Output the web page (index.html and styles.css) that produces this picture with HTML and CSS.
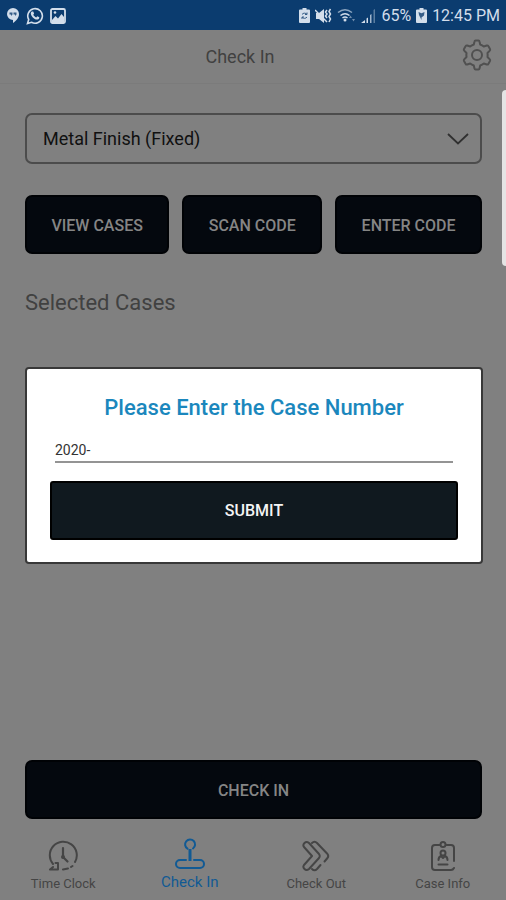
FILE: index.html
```html
<!DOCTYPE html>
<html lang="en">
<head>
<meta charset="utf-8">
<meta name="viewport" content="width=device-width, initial-scale=1">
<title>Check In</title>
<link rel="stylesheet" href="styles.css">
</head>
<body>
<div class="app">
  <div class="status">
    <div class="status-group notifications">
      <svg width="14" height="17" viewBox="0 0 14 17"><path fill="currentColor" d="M7 1a6 6 0 0 1 6 6c0 4-3 7-6 9v-3A6 6 0 1 1 7 1z"/><path class="ink" d="M3.500 5.500h3v2L5 9V7.500H3.500zM7.500 5.500h3v2L9 9V7.500H7.500z"/></svg>
      <svg width="18" height="18" viewBox="0 0 18 18"><path fill="none" stroke="currentColor" stroke-width="1.600" d="M1.500 16.500l1.200-4A7.300 7.300 0 1 1 5.500 15.300z"/><path fill="currentColor" d="M6 4.500l1.200.1.900 2-.8 1.100c.7 1.300 1.600 2.100 2.900 2.700l1.100-1.100 2 1c.1 1.500-.9 2.300-2.300 2.300C8 12.500 5 9 4.800 6.500c0-.9.500-1.700 1.200-2z"/></svg>
      <svg width="16" height="16" viewBox="0 0 16 16"><rect x="1" y="1" width="14" height="14" rx="1.500" fill="none" stroke="currentColor" stroke-width="1.800"/><path fill="currentColor" d="M2 12l3.500-4 2.500 2.500L11.500 6 14 9v5H2z"/><circle cx="5" cy="4.500" r="1.300" fill="currentColor"/></svg>
    </div>
    <div class="status-group">
      <svg width="11" height="15" viewBox="0 0 11 15"><path fill="currentColor" d="M3.500 0h4v1.500H10a1 1 0 0 1 1 1V14a1 1 0 0 1-1 1H1a1 1 0 0 1-1-1V2.500a1 1 0 0 1 1-1h2.500z"/><path class="ink-line" d="M3 6.500a3 3 0 0 1 5 0M8 9a3 3 0 0 1-5 0M8 4.500v2H6M3 11V9h2"/></svg>
      <svg width="17" height="16" viewBox="0 0 17 16"><path fill="currentColor" d="M1 5h3l5-4v14l-5-4H1z"/><path fill="none" stroke="currentColor" stroke-width="1.500" d="M0 2l12 12M12 2l-1.500 2L12 6l-1.500 2 1.500 2M15.500 1L14 3.500 15.500 6 14 8.500l1.500 2.500-1.500 3"/></svg>
      <svg width="19" height="15" viewBox="0 0 19 15"><g fill="none" stroke="currentColor" stroke-width="1.500"><path d="M1 4.500Q8 -1 15 4.500" opacity=".65"/><path d="M3.500 7.500Q8 4 12.500 7.500M5.500 10Q8 8 10.500 10"/></g><circle cx="8" cy="12" r="1.500" fill="currentColor"/><path fill="currentColor" opacity=".5" d="M12 10h3l-1.500-2.500zM15 11h3l-1.500 2.500z"/></svg>
      <svg width="15" height="14" viewBox="0 0 15 14"><path fill="currentColor" d="M0 14h4v-3zM5.500 14H7V8.500l-1.500 1z"/><path fill="currentColor" opacity=".75" d="M9 14h1.500V5L9 6z"/><path fill="currentColor" opacity=".4" d="M12.500 14H14V0l-1.500 1z"/></svg>
      <span>65%</span>
      <svg width="11" height="15" viewBox="0 0 11 15"><path fill="currentColor" d="M3.500 0h4v1.500H10a1 1 0 0 1 1 1V14a1 1 0 0 1-1 1H1a1 1 0 0 1-1-1V2.500a1 1 0 0 1 1-1h2.500z"/><path class="ink" d="M2.500 4l3 1.200L8.500 4 8 7.500 5.500 9.500V12L4 9l-1-2z"/></svg>
      <time>12:45 PM</time>
    </div>
  </div>

  <div class="screen">
    <header class="header">
      <h1>Check In</h1>
      <button class="settings" type="button" aria-label="Settings">
        <svg width="30" height="32" viewBox="0 0 30 32"><g fill="none" stroke="currentColor" stroke-width="2" stroke-linejoin="round"><path d="M13.500 1.500h3q.8 0 1 1l.7 3q2 .7 3.600 2l3-1q1-.3 1.500.6l1.700 2.900q.5.900-.2 1.600L25.500 14q.3 2 0 4l2.300 2.400q.7.700.2 1.600l-1.700 2.900q-.5.900-1.500.6l-3-1q-1.600 1.300-3.600 2l-.7 3q-.2 1-1 1h-3q-.8 0-1-1l-.7-3q-2-.7-3.600-2l-3 1q-1 .3-1.500-.6L2 22q-.5-.9.200-1.600L4.500 18q-.3-2 0-4l-2.300-2.400Q1.500 10.900 2 10l1.700-2.900q.5-.9 1.500-.6l3 1q1.600-1.300 3.600-2l.7-3q.2-1 1-1z"/><circle cx="15" cy="16" r="5"/></g></svg>
      </button>
    </header>

    <main class="content">
      <div class="picker">
        <select aria-label="Department"><option>Metal Finish (Fixed)</option></select>
        <svg width="22" height="12" viewBox="0 0 22 12"><path fill="none" stroke="currentColor" stroke-width="1.800" d="M1 1l10 9.500L21 1"/></svg>
      </div>
      <div class="actions">
        <button class="btn" type="button">VIEW CASES</button>
        <button class="btn" type="button">SCAN CODE</button>
        <button class="btn" type="button">ENTER CODE</button>
      </div>
      <h2>Selected Cases</h2>
      <button class="btn check-in" type="button">CHECK IN</button>
    </main>

    <nav class="tabs">
      <a href="#clock"><svg width="30" height="32" viewBox="0 0 30 32"><g fill="none" stroke="currentColor" stroke-width="2" stroke-linecap="round" stroke-linejoin="round"><path d="M5 24A13.500 13.500 0 1 1 27 22M24.500 26l-1.500 1M20 28.500l-5 1M2 29.500h8v-6.500H7.500M2 29.500l3-2.500"/><path d="M15 8v9l4.500 4.500" stroke-width="2.200"/></g><circle cx="15" cy="17" r="2" fill="currentColor"/></svg><span>Time Clock</span></a>
      <a href="#in" class="active" aria-current="page"><svg width="30" height="32" viewBox="0 0 30 32"><g fill="none" stroke="currentColor" stroke-width="2" stroke-linecap="round"><path d="M18 10.500A5 5 0 1 0 12.500 10.700"/><path d="M15 11v12" stroke-width="3" stroke-linecap="butt"/><path d="M11 22H5a4 4 0 0 0 0 8h20a4 4 0 0 0 0-8h-6"/></g></svg><span>Check In</span></a>
      <a href="#out"><svg width="30" height="32" viewBox="0 0 30 32"><g fill="none" stroke="currentColor" stroke-width="2" stroke-linecap="round" stroke-linejoin="round"><path d="M8 3Q5.500 1 3.500 3T3 7l8 9-8 9q-1.500 2 .5 4T8 29l10-11q1.500-2 0-4z"/><path d="M11 3q2.500-2.500 5 0l10.500 11q1.500 2 0 4l-3 3.500M11 29q2.500 2.500 5 0l3.500-4"/></g></svg><span>Check Out</span></a>
      <a href="#info"><svg width="30" height="32" viewBox="0 0 30 32"><g fill="none" stroke="currentColor" stroke-width="2" stroke-linecap="round" stroke-linejoin="round"><path d="M11.500 5H7a3 3 0 0 0-3 3v19a3 3 0 0 0 3 3h16q2 0 3-2M18.500 5H23a3 3 0 0 1 3 3v13M10.500 24.500h9"/><circle cx="15" cy="4.500" r="2.500"/><circle cx="15" cy="13" r="2.500"/><path d="M10.500 20q0-3 2.500-4l2 2 2-2q2.500 1 2.500 4"/></g></svg><span>Case Info</span></a>
    </nav>

    <span class="edge-handle"></span>

    <div class="overlay">
      <form class="dialog" role="dialog" aria-labelledby="dialog-title">
        <h2 id="dialog-title"><label for="case-number">Please Enter the Case Number</label></h2>
        <input id="case-number" type="text" value="2020-">
        <button class="submit" type="button">SUBMIT</button>
      </form>
    </div>
  </div>
</div>
</body>
</html>
```

FILE: styles.css
```css
* { box-sizing: border-box; }

body {
  margin: 0;
  background: #808080;
  color: #414141;
  font-family: Roboto, "Liberation Sans", sans-serif;
}

button, input, select { font: inherit; }
button { cursor: pointer; }
svg { display: block; flex: none; }

.app {
  display: flex;
  flex-direction: column;
  min-height: 100vh;
}

/* Device status bar */
.status {
  display: flex;
  align-items: center;
  justify-content: space-between;
  height: 30px;
  padding: 1px 6px 0;
  background: #0b3c6f;
  color: #d3deeb;
  font-size: 16px;
}
.status-group { display: flex; align-items: center; gap: 5px; }
.notifications { gap: 6px; }
.status .ink { fill: #365d87; }
.status .ink-line { fill: none; stroke: #365d87; stroke-width: 1; }

.screen {
  position: relative;
  display: flex;
  flex: 1;
  flex-direction: column;
}

.header {
  display: flex;
  align-items: center;
  height: 54px;
  padding: 0 14px 0 18px;
  border-bottom: 1px solid #7b7b7b;
}
.header h1 {
  flex: 1;
  margin: 0;
  font-size: 18px;
  font-weight: 400;
  text-align: center;
}
.settings {
  padding: 0 0 4px;
  border: 0;
  background: none;
  color: #505050;
}

.content {
  display: flex;
  flex: 1;
  flex-direction: column;
  padding: 29px 24px 0 25px;
}
.picker {
  display: grid;
  align-items: center;
  color: #303030;
}
.picker select, .picker svg { grid-area: 1 / 1; }
.picker svg {
  justify-self: end;
  margin-right: 13px;
  pointer-events: none;
}
.picker select {
  width: 100%;
  height: 51px;
  padding: 0 16px;
  appearance: none;
  border: 2px solid #4c4c4c;
  border-radius: 7px;
  background: transparent;
  color: #101010;
  font-size: 18px;
}
.actions {
  display: flex;
  gap: 13px;
  margin-top: 31px;
}
.actions .btn { flex: 1 1 auto; }
.btn {
  height: 59px;
  padding: 2px 0 0;
  border: 2px solid #000205;
  border-radius: 7px;
  background: #04080e;
  color: #858585;
  font-size: 16px;
  font-weight: 500;
}
.content h2 {
  margin: 35px 0 0;
  font-size: 22px;
  font-weight: 400;
  line-height: 28px;
}
.content .check-in { margin-top: auto; }

.tabs {
  display: grid;
  grid-template-columns: repeat(4, 1fr);
  height: 81px;
  padding-top: 21px;
}
.tabs a {
  display: flex;
  flex-direction: column;
  align-items: center;
  gap: 4px;
  color: #454545;
  font-size: 13px;
  line-height: 16px;
  text-decoration: none;
}
.tabs .active {
  margin-top: -2px;
  color: #115a94;
  font-size: 15px;
}

.edge-handle {
  position: absolute;
  top: 60px;
  right: 0;
  width: 4px;
  height: 176px;
  border-radius: 4px 0 0 4px;
  background: #e4e4e4;
}

/* Case number dialog */
.overlay {
  position: absolute;
  inset: 0;
  display: flex;
  align-items: center;
  padding: 0 23px 0 25px;
}
.dialog {
  display: flex;
  flex: 1;
  flex-direction: column;
  padding: 24px 23px 22px;
  border: 2px solid #383838;
  border-radius: 4px;
  background: #fff;
}
.dialog h2 {
  margin: 0;
  color: #1b87bd;
  font-size: 22px;
  font-weight: 500;
  line-height: 30px;
  text-align: center;
}
.dialog input {
  height: 24px;
  margin: 16px 5px 0;
  padding: 0;
  border: 0;
  border-bottom: 2px solid #949494;
  outline: 0;
  color: #333;
  font-size: 14px;
}
.submit {
  height: 59px;
  margin-top: 18px;
  border: 2px solid #000;
  border-radius: 3px;
  background: #10191f;
  color: #f4f4f4;
  font-size: 16px;
  font-weight: 500;
}
```
